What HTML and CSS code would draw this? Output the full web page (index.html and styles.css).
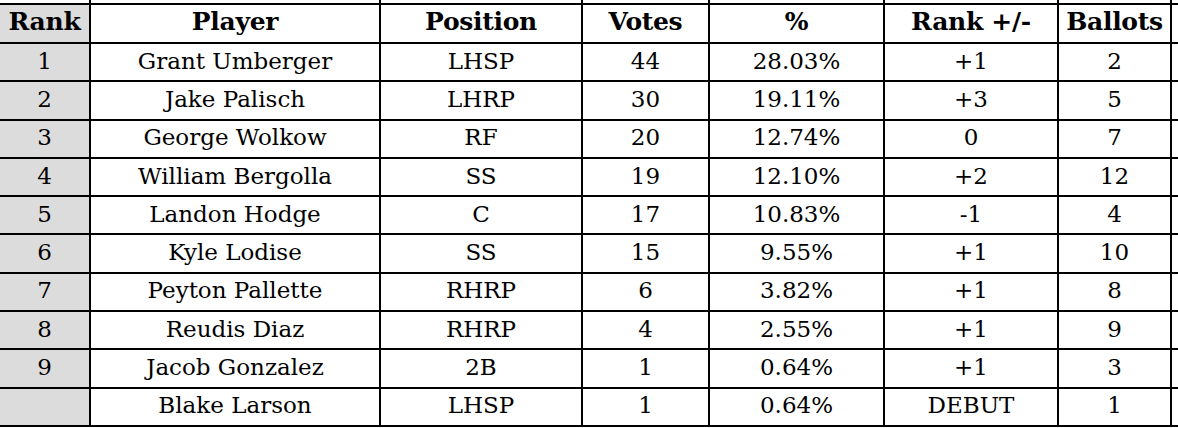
FILE: index.html
```html
<!DOCTYPE html>
<html>
<head>
<meta charset="utf-8">
<link rel="stylesheet" href="styles.css">
</head>
<body>
<table class="votes">
  <colgroup>
    <col class="c-rank"><col class="c-player"><col class="c-pos"><col class="c-votes"><col class="c-pct"><col class="c-delta"><col class="c-ballots"><col class="c-stub">
  </colgroup>
  <tr class="stub"><td class="rank"></td><td></td><td></td><td></td><td></td><td></td><td></td><td></td></tr>
  <tr class="head">
    <th class="rank">Rank</th><th>Player</th><th>Position</th><th>Votes</th><th>%</th><th>Rank +/-</th><th>Ballots</th><th></th>
  </tr>
  <tr><td class="rank">1</td><td>Grant Umberger</td><td>LHSP</td><td>44</td><td>28.03%</td><td>+1</td><td>2</td><td></td></tr>
  <tr><td class="rank">2</td><td>Jake Palisch</td><td>LHRP</td><td>30</td><td>19.11%</td><td>+3</td><td>5</td><td></td></tr>
  <tr><td class="rank">3</td><td>George Wolkow</td><td>RF</td><td>20</td><td>12.74%</td><td>0</td><td>7</td><td></td></tr>
  <tr><td class="rank">4</td><td>William Bergolla</td><td>SS</td><td>19</td><td>12.10%</td><td>+2</td><td>12</td><td></td></tr>
  <tr><td class="rank">5</td><td>Landon Hodge</td><td>C</td><td>17</td><td>10.83%</td><td>-1</td><td>4</td><td></td></tr>
  <tr><td class="rank">6</td><td>Kyle Lodise</td><td>SS</td><td>15</td><td>9.55%</td><td>+1</td><td>10</td><td></td></tr>
  <tr><td class="rank">7</td><td>Peyton Pallette</td><td>RHRP</td><td>6</td><td>3.82%</td><td>+1</td><td>8</td><td></td></tr>
  <tr><td class="rank">8</td><td>Reudis Diaz</td><td>RHRP</td><td>4</td><td>2.55%</td><td>+1</td><td>9</td><td></td></tr>
  <tr><td class="rank">9</td><td>Jacob Gonzalez</td><td>2B</td><td>1</td><td>0.64%</td><td>+1</td><td>3</td><td></td></tr>
  <tr><td class="rank"></td><td>Blake Larson</td><td>LHSP</td><td>1</td><td>0.64%</td><td>DEBUT</td><td>1</td><td></td></tr>
</table>
</body>
</html>
```
FILE: styles.css
```css
html, body {
  margin: 0;
  padding: 0;
  background: #ffffff;
  overflow: hidden;
}
.votes {
  border-collapse: separate;
  border-spacing: 0;
  table-layout: fixed;
  width: 1190px;
  font-family: "DejaVu Serif", Georgia, serif;
  font-variant-numeric: oldstyle-nums;
  color: #000;
}
.c-rank { width: 91px; }
.c-player { width: 290px; }
.c-pos { width: 202px; }
.c-votes { width: 127px; }
.c-pct { width: 175px; }
.c-delta { width: 174px; }
.c-ballots { width: 113px; }
.c-stub { width: 18px; }
.votes td, .votes th {
  border-right: 2px solid #000;
  border-bottom: 2px solid #000;
  padding: 0 0 3px 0;
  text-align: center;
  vertical-align: middle;
  white-space: nowrap;
  overflow: hidden;
  box-sizing: content-box;
  font-size: 23px;
  font-weight: normal;
  height: 33.3px;
  line-height: 26px;
}
.votes .stub td {
  height: 3px;
  padding: 0;
  border-bottom: 2px solid #000;
}
.votes .head th {
  font-weight: bold;
  font-size: 25px;
  height: 34px;
  letter-spacing: -0.3px;
}
.votes .rank {
  background: #dcdcdc;
}
.votes .stub .rank {
  background: #ffffff;
}
```
